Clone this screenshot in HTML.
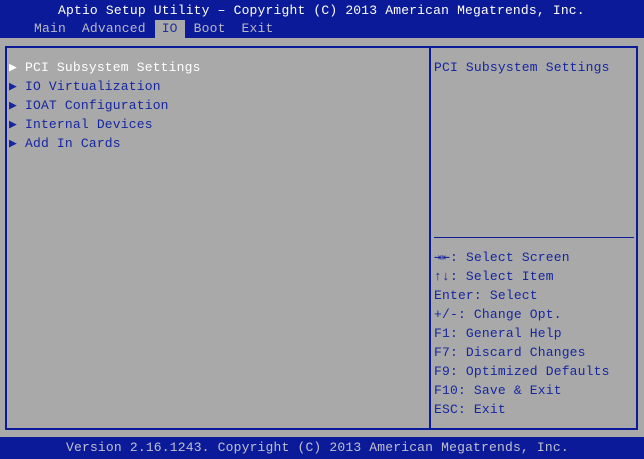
<!DOCTYPE html><html><head><style>
body{margin:0;width:644px;height:459px;background:#a9a9a9;position:relative;overflow:hidden;font-family:"Liberation Mono","DejaVu Sans Mono",monospace;font-size:13px;letter-spacing:0.18px;}
.a{position:absolute;white-space:pre;line-height:19px;}
.b{color:#1626a0}
</style></head><body>
<div style="position:absolute;left:0;top:0;width:644px;height:38px;background:#0a1a98"></div>
<div class="a" style="left:58px;top:1px;color:#fff">Aptio Setup Utility – Copyright (C) 2013 American Megatrends, Inc.</div>
<div style="position:absolute;left:155px;top:20px;width:30px;height:18px;background:#a9a9a9"></div>
<div class="a" style="left:34px;top:19px;color:#b8b8c8">Main  Advanced  <span style="color:#2030a0">IO</span>  Boot  Exit</div>
<div style="position:absolute;left:5px;top:46px;width:629px;height:380px;border:2px solid #0a1a98"></div>
<div style="position:absolute;left:429px;top:46px;width:2px;height:382px;background:#0a1a98"></div>
<div style="position:absolute;left:434px;top:237px;width:200px;height:1px;background:#0a1a98"></div>
<div class="a" style="left:9px;top:58px;color:#fff">▶ PCI Subsystem Settings</div>
<div class="a b" style="left:9px;top:77px">▶ IO Virtualization</div>
<div class="a b" style="left:9px;top:96px">▶ IOAT Configuration</div>
<div class="a b" style="left:9px;top:115px">▶ Internal Devices</div>
<div class="a b" style="left:9px;top:134px">▶ Add In Cards</div>
<div class="a b" style="left:434px;top:58px">PCI Subsystem Settings</div>
<div class="a b" style="left:434px;top:248px">⇥⇤: Select Screen
↑↓: Select Item
Enter: Select
+/-: Change Opt.
F1: General Help
F7: Discard Changes
F9: Optimized Defaults
F10: Save &amp; Exit
ESC: Exit</div>
<div style="position:absolute;left:0;top:437px;width:644px;height:22px;background:#0a1a98"></div>
<div class="a" style="left:66px;top:438px;color:#c0c0d0">Version 2.16.1243. Copyright (C) 2013 American Megatrends, Inc.</div>
</body></html>
